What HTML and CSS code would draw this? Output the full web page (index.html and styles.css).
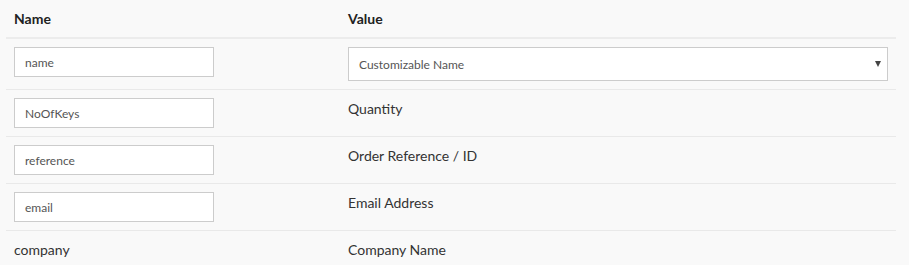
FILE: index.html
```html
<!DOCTYPE html>
<html lang="en">

<head>
    <meta charset="UTF-8">
    <meta name="viewport" content="width=device-width, initial-scale=1.0">
    <title>Field Mapping</title>
    <link rel="stylesheet" href="styles.css">
</head>

<body>
    <table class="mapping-table">
        <thead>
            <tr>
                <th class="name-col">Name</th>
                <th>Value</th>
            </tr>
        </thead>
        <tbody>
            <tr>
                <td><input type="text" class="field-input" value="name"></td>
                <td>
                    <div class="select-wrap">
                        <select class="field-select">
                            <option>Customizable Name</option>
                            <option>Quantity</option>
                            <option>Order Reference / ID</option>
                            <option>Email Address</option>
                            <option>Company Name</option>
                        </select>
                    </div>
                </td>
            </tr>
            <tr>
                <td><input type="text" class="field-input" value="NoOfKeys"></td>
                <td>Quantity</td>
            </tr>
            <tr>
                <td><input type="text" class="field-input" value="reference"></td>
                <td>Order Reference / ID</td>
            </tr>
            <tr>
                <td><input type="text" class="field-input" value="email"></td>
                <td>Email Address</td>
            </tr>
            <tr>
                <td>company</td>
                <td>Company Name</td>
            </tr>
        </tbody>
    </table>
</body>

</html>
```

FILE: styles.css
```css
body {
    margin: 0;
    padding: 0 13px 0 6px;
    background-color: #f9f9f9;
    font-family: Lato, "Open Sans", sans-serif;
    font-size: 14px;
    color: #333;
}

.mapping-table {
    width: 100%;
    border-collapse: collapse;
}

.mapping-table th,
.mapping-table td {
    padding: 8px;
    line-height: 21px;
    text-align: left;
    vertical-align: top;
}

.mapping-table th {
    font-weight: bold;
    color: #222;
    border-bottom: 2px solid #ececec;
}

.mapping-table td {
    border-top: 1px solid #e9e9e9;
}

.mapping-table .name-col {
    width: 318px;
}

.field-input {
    display: block;
    box-sizing: border-box;
    width: 200px;
    height: 30px;
    margin: 0;
    padding: 0 10px;
    border: 1px solid #ccc;
    background-color: #fff;
    font-family: Lato, "Open Sans", sans-serif;
    font-size: 12px;
    color: #555;
}

.select-wrap {
    position: relative;
}

.field-select {
    display: block;
    box-sizing: border-box;
    width: 100%;
    height: 34px;
    margin: 0;
    padding: 0 30px 0 10px;
    border: 1px solid #ccc;
    border-radius: 0;
    background-color: #fff;
    font-family: Lato, "Open Sans", sans-serif;
    font-size: 12px;
    color: #555;
    appearance: none;
    -webkit-appearance: none;
}

/* little dropdown arrow on the right of the select */
.select-wrap::after {
    content: "";
    position: absolute;
    right: 7px;
    top: 14px;
    border-left: 3.5px solid transparent;
    border-right: 3.5px solid transparent;
    border-top: 6px solid #444;
    pointer-events: none;
}
```
